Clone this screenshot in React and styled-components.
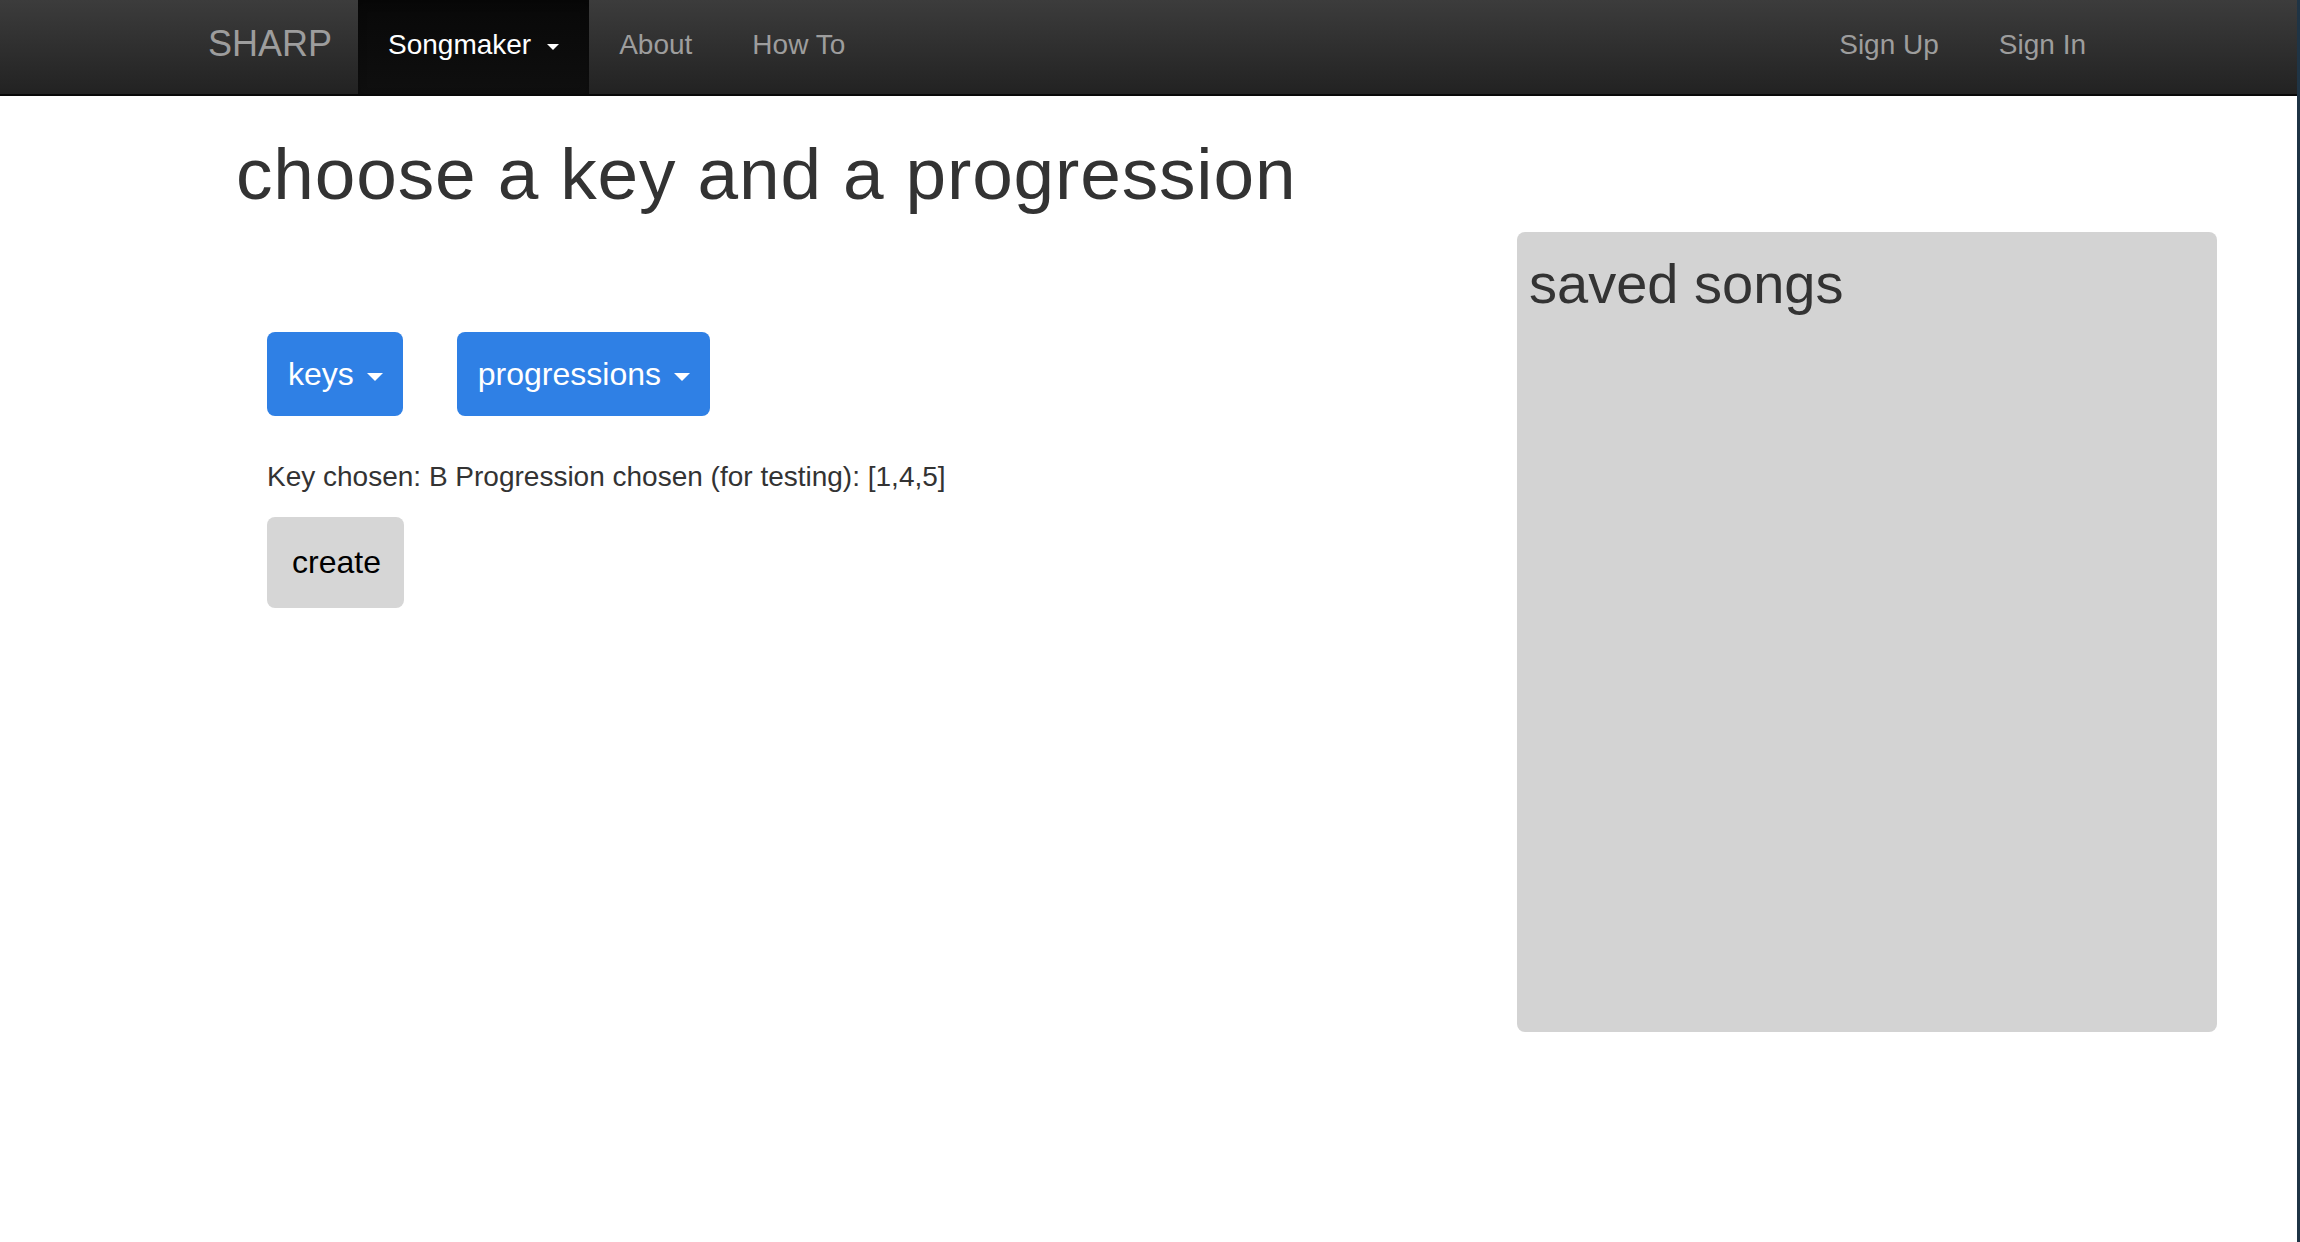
import React, { useState } from "react";
import styled, { createGlobalStyle } from "styled-components";

const GlobalStyle = createGlobalStyle`
  html, body {
    margin: 0;
    padding: 0;
    background: #fff;
  }
  body {
    font-family: "Liberation Sans", Arial, Helvetica, sans-serif;
    color: #333;
  }
  * {
    box-sizing: border-box;
  }
`;

const Page = styled.div`
  min-height: 1242px;
  border-right: 3px solid #1f3445;
`;

const Nav = styled.nav`
  height: 96px;
  background-image: linear-gradient(to bottom, #3c3c3c 0, #222 100%);
  border-bottom: 2px solid #080808;
`;

const NavInner = styled.div`
  display: flex;
  align-items: stretch;
  height: 94px;
  margin: 0 181px 0 178px;
`;

const Brand = styled.a`
  width: 180px;
  padding: 24px 0 0 30px;
  font-size: 36px;
  line-height: 40px;
  color: #9d9d9d;
  text-decoration: none;
`;

const NavList = styled.ul`
  display: flex;
  margin: 0;
  padding: 0;
  list-style: none;
  margin-left: ${(p) => (p.right ? "auto" : "0")};
`;

const NavItem = styled.li`
  display: block;
  padding: 25px 30px 0;
  font-size: 28px;
  line-height: 40px;
  color: ${(p) => (p.active ? "#fff" : "#9d9d9d")};
  background-image: ${(p) =>
    p.active ? "linear-gradient(to bottom, #080808 0, #0f0f0f 100%)" : "none"};
  box-shadow: ${(p) => (p.active ? "inset 0 3px 9px rgba(0, 0, 0, 0.25)" : "none")};
  cursor: pointer;
`;

const Caret = styled.span`
  display: inline-block;
  width: 0;
  height: 0;
  margin-left: ${(p) => p.gap || 12}px;
  vertical-align: middle;
  border-top: ${(p) => p.size || 7}px solid currentColor;
  border-left: ${(p) => p.size || 7}px solid transparent;
  border-right: ${(p) => p.size || 7}px solid transparent;
`;

const Main = styled.main`
  display: flex;
  align-items: flex-start;
  padding: 38px 80px 0 236px;
`;

const LeftCol = styled.section`
  flex: 1;
`;

const Title = styled.h1`
  margin: 0;
  font-size: 73px;
  font-weight: 400;
  line-height: 80px;
  letter-spacing: 0.85px;
  color: #333;
`;

const Controls = styled.div`
  padding: 118px 0 0 31px;
`;

const ButtonRow = styled.div`
  display: flex;
  gap: 54px;
`;

const DropButton = styled.button`
  display: block;
  padding: 21px 20px 21px 21px;
  border: none;
  border-radius: 8px;
  background: #2f80e5;
  color: #fff;
  font-family: inherit;
  font-size: 32px;
  line-height: 42px;
  cursor: pointer;
`;

const Status = styled.p`
  margin: 41px 0 20px;
  font-size: 28px;
  line-height: 40px;
  color: #333;
`;

const CreateButton = styled.button`
  padding: 24px 23px 25px 25px;
  border: none;
  border-radius: 8px;
  background: #d6d6d6;
  color: #000;
  font-family: inherit;
  font-size: 32px;
  line-height: 42px;
  cursor: pointer;
`;

const SavedPanel = styled.aside`
  width: 700px;
  height: 800px;
  margin-top: 98px;
  padding: 21px 12px;
  border-radius: 8px;
  background: #d3d3d3;
`;

const PanelTitle = styled.h2`
  margin: 0;
  font-size: 56px;
  font-weight: 400;
  line-height: 62px;
  color: #333;
`;

const leftLinks = ["About", "How To"];
const rightLinks = ["Sign Up", "Sign In"];

const App = () => {
  const [key] = useState("B");
  const [progression] = useState([1, 4, 5]);

  return (
    <>
      <GlobalStyle />
      <Page>
        <Nav>
          <NavInner>
            <Brand href="#">SHARP</Brand>
            <NavList>
              <NavItem active>
                Songmaker
                <Caret gap={16} size={6} />
              </NavItem>
              {leftLinks.map((label) => (
                <NavItem key={label}>{label}</NavItem>
              ))}
            </NavList>
            <NavList right>
              {rightLinks.map((label) => (
                <NavItem key={label}>{label}</NavItem>
              ))}
            </NavList>
          </NavInner>
        </Nav>

        <Main>
          <LeftCol>
            <Title>choose a key and a progression</Title>
            <Controls>
              <ButtonRow>
                <DropButton>
                  keys
                  <Caret gap={13} size={8} />
                </DropButton>
                <DropButton>
                  progressions
                  <Caret gap={13} size={8} />
                </DropButton>
              </ButtonRow>
              <Status>
                Key chosen: {key} Progression chosen (for testing): [{progression.join(",")}]
              </Status>
              <CreateButton>create</CreateButton>
            </Controls>
          </LeftCol>

          <SavedPanel>
            <PanelTitle>saved songs</PanelTitle>
          </SavedPanel>
        </Main>
      </Page>
    </>
  );
};

export default App;
